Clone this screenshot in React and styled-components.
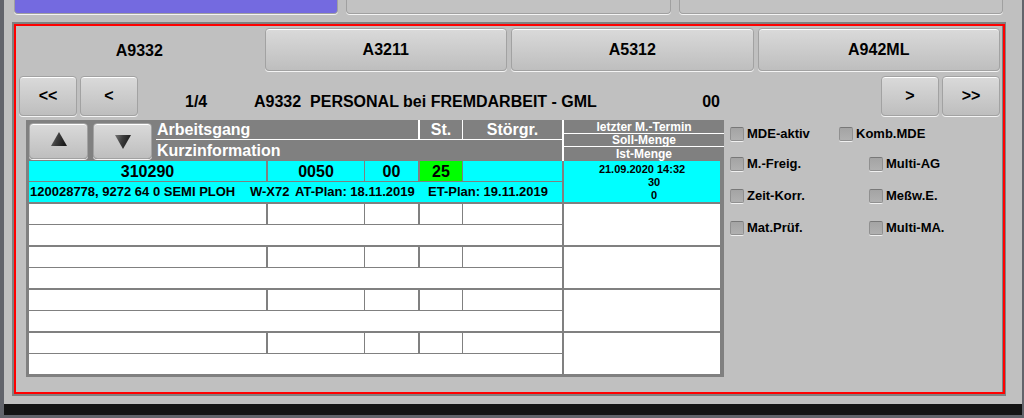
import React from "react";
import styled, { createGlobalStyle } from "styled-components";

const GlobalStyle = createGlobalStyle`
  *, *::before, *::after { box-sizing: border-box; }
  body {
    margin: 0;
    background: #62646b;
    color: #000;
    font-family: "Liberation Sans", Arial, sans-serif;
    font-size: 16px;
    font-weight: bold;
  }
`;

const Frame = styled.div`
  display: flex;
  flex-direction: column;
  min-height: 100vh;
  padding: 0 2px 3px 4px;
`;

const Screen = styled.main`
  flex: 1;
  padding: 0 16px 8px 8px;
  background: #c0c0c0;
`;

const BottomBar = styled.footer`
  height: 11px;
  background: #141414;
`;

const TopStrip = styled.div`
  display: grid;
  grid-template-columns: repeat(3, 1fr);
  gap: 8px;
  height: 14px;
  margin: 0 3px 8px 2px;
`;

const StripButton = styled.button`
  border: 1px solid #a0a0a0;
  border-top: 0;
  border-radius: 0 0 4px 4px;
  padding: 0;
  background: ${(p) => (p.$active ? "#746ae0" : "#c2c2c2")};
  box-shadow: 0 1px 0 #f4f4f4;
`;

const Panel = styled.section`
  border: 2px solid #808080;
  border-right-width: 1px;
`;

const PanelInner = styled.div`
  border: 2px solid #f00;
  padding: 2px 0 15px;
  box-shadow: inset -1px 0 0 #808080;
`;

const Button = styled.button`
  display: flex;
  align-items: center;
  justify-content: center;
  width: ${(p) => p.$width || "auto"};
  height: ${(p) => p.$height};
  padding: 0;
  border: 1px solid #a2a2a2;
  border-radius: 4px;
  background: linear-gradient(#dadada, #bebebe);
  box-shadow: inset 0 1px 0 #fff, 0 1px 0 #f4f4f4;
  color: #000;
  font: bold 16px "Liberation Sans", Arial, sans-serif;
`;

const Tabs = styled.nav`
  display: grid;
  grid-template-columns: repeat(4, 1fr);
  gap: 4px;
  padding: 0 3px 0 2px;
`;

const ActiveTab = styled.button`
  padding: 2px 0 0;
  border: 0;
  background: transparent;
  color: #000;
  font: bold 16px "Liberation Sans", Arial, sans-serif;
`;

const Toolbar = styled.div`
  display: flex;
  gap: 3px;
  padding: 5px 3px 4px;
`;

const Heading = styled.div`
  flex: 1;
  display: flex;
  align-items: center;
  padding: 12px 158px 0 44px;
  white-space: pre;
`;

const PageCount = styled.span`
  width: 69px;
`;

const Title = styled.h1`
  flex: 1;
  margin: 0;
  font-size: 16px;
`;

const Content = styled.div`
  display: flex;
  align-items: flex-start;
  padding-left: 10px;
`;

const TableBox = styled.div`
  flex: 1;
  padding: 0 0 1px 3px;
  background: #808080;
`;

const Table = styled.table`
  width: 100%;
  table-layout: fixed;
  border-collapse: separate;
  border-spacing: 0;
`;

const Row = styled.tr`
  height: ${(p) => p.$height}px;
`;

const HeadCell = styled.th`
  padding: 0 0 0 ${(p) => (p.$left ? "1px" : "0")};
  border: 0 solid #fff;
  border-right-width: ${(p) => p.$right || 0}px;
  border-bottom-width: ${(p) => (p.$bottom ? 1 : 0)}px;
  color: #fff;
  font-size: ${(p) => (p.$small ? 12 : 16)}px;
  line-height: ${(p) => (p.$small ? 12 : 18)}px;
  text-align: ${(p) => (p.$left ? "left" : "center")};
  white-space: nowrap;
`;

const Arrows = styled.div`
  display: flex;
  gap: 5px;
`;

const Cell = styled.td`
  padding: ${(p) => (p.$bottom ? 0 : 2)}px 0 0;
  border: 0 solid #808080;
  border-right-width: ${(p) => p.$right || 0}px;
  border-bottom-width: ${(p) => p.$bottom || 1}px;
  background: ${(p) => (p.$status ? "#0f0" : p.$active ? "#0ff" : "#fff")};
  font-size: 16px;
  line-height: 18px;
  text-align: center;
  white-space: nowrap;
`;

const Info = styled.div`
  display: flex;
  padding-left: 1px;
  overflow: hidden;
  font-size: 13px;
  line-height: 18px;
  text-align: left;
`;

const InfoPart = styled.span`
  flex: none;
  width: ${(p) => p.$width}px;
`;

const Amounts = styled.div`
  padding-left: ${(p) => (p.$shifted ? 24 : 0)}px;
  font-size: 11px;
  line-height: 13px;

  &:first-child {
    padding-top: 2px;
  }
`;

const Options = styled.form`
  width: 279px;
  padding: 6px 0 0 6px;
  display: grid;
  grid-template-rows: 30px;
  grid-auto-rows: 32px;
  align-items: start;
`;

const OptionRow = styled.div`
  display: grid;
  grid-template-columns: ${(p) => (p.$compact ? "109px" : "139px")} 1fr;
`;

const Option = styled.label`
  display: flex;
  align-items: center;
  gap: 3px;
  font-size: 13px;
  line-height: 16px;
`;

const Check = styled.input.attrs({ type: "checkbox" })`
  appearance: none;
  width: 14px;
  height: 14px;
  margin: 0;
  border: 1px solid #909090;
  border-top-color: #787878;
  border-radius: 2px;
  background: linear-gradient(#a4a4a4, #b0b0b0);
  box-shadow: 0 1px 0 #f0f0f0;
`;

const Arrow = ({ down }) => (
  <svg width="16" height="17" viewBox="0 0 16 17" aria-hidden="true">
    <defs>
      <linearGradient id={down ? "shadeDown" : "shadeUp"} x1="0" y1="0" x2="1" y2="0.3">
        <stop offset="0" stopColor="#777" />
        <stop offset="0.5" stopColor="#3c3c3c" />
        <stop offset="1" stopColor="#1c1c1c" />
      </linearGradient>
    </defs>
    <path
      d={down ? "M0 3H16L8 17Z" : "M8 0L16 14H0Z"}
      fill={`url(#${down ? "shadeDown" : "shadeUp"})`}
    />
  </svg>
);

const orders = [
  {
    id: "310290",
    step: "0050",
    split: "00",
    status: "25",
    info: ["120028778, 9272 64 0 SEMI PLOH", "W-X72", "AT-Plan: 18.11.2019", "ET-Plan: 19.11.2019"],
    amounts: ["21.09.2020 14:32", "30", "0"],
  },
  {},
  {},
  {},
  {},
];

const infoWidths = [220, 45, 133, 130];

const options = [
  ["MDE-aktiv", "Komb.MDE"],
  ["M.-Freig.", "Multi-AG"],
  ["Zeit-Korr.", "Meßw.E."],
  ["Mat.Prüf.", "Multi-MA."],
];

const Order = ({ order }) => {
  const active = Boolean(order.id);
  return (
    <>
      <Row $height={21}>
        <Cell $active={active} colSpan={2} $right={2}>{order.id}</Cell>
        <Cell $active={active} $right={1}>{order.step}</Cell>
        <Cell $active={active} $right={2}>{order.split}</Cell>
        <Cell $active={active} $status={active} $right={1}>{order.status}</Cell>
        <Cell $active={active} $right={2} />
        <Cell $active={active} rowSpan={2} $right={4} $bottom={2}>
          {order.amounts?.map((value, i) => (
            <Amounts key={value} $shifted={i > 0}>{value}</Amounts>
          ))}
        </Cell>
      </Row>
      <Row $height={22}>
        <Cell $active={active} colSpan={6} $right={2} $bottom={2}>
          {active && (
            <Info>
              {order.info.map((part, i) => (
                <InfoPart key={part} $width={infoWidths[i]}>{part}</InfoPart>
              ))}
            </Info>
          )}
        </Cell>
      </Row>
    </>
  );
};

export default function App() {
  return (
    <>
      <GlobalStyle />
      <Frame>
        <Screen>
          <TopStrip>
            <StripButton $active aria-label="1" />
            <StripButton aria-label="2" />
            <StripButton aria-label="3" />
          </TopStrip>
          <Panel>
            <PanelInner>
              <Tabs>
                <ActiveTab>A9332</ActiveTab>
                <Button $height="43px">A3211</Button>
                <Button $height="43px">A5312</Button>
                <Button $height="43px">A942ML</Button>
              </Tabs>
              <Toolbar>
                <Button $width="58px" $height="40px">&lt;&lt;</Button>
                <Button $width="58px" $height="40px">&lt;</Button>
                <Heading>
                  <PageCount>1/4</PageCount>
                  <Title>A9332  PERSONAL bei FREMDARBEIT - GML</Title>
                  <span>00</span>
                </Heading>
                <Button $width="58px" $height="40px">&gt;</Button>
                <Button $width="58px" $height="40px">&gt;&gt;</Button>
              </Toolbar>
              <Content>
                <TableBox>
                  <Table>
                    <colgroup>
                      <col style={{ width: 127 }} />
                      <col />
                      <col style={{ width: 97 }} />
                      <col style={{ width: 55 }} />
                      <col style={{ width: 43 }} />
                      <col style={{ width: 101 }} />
                      <col style={{ width: 160 }} />
                    </colgroup>
                    <thead>
                      <Row $height={14}>
                        <HeadCell rowSpan={4}>
                          <Arrows>
                            <Button $width="59px" $height="36px" aria-label="Nach oben"><Arrow /></Button>
                            <Button $width="59px" $height="36px" aria-label="Nach unten"><Arrow down /></Button>
                          </Arrows>
                        </HeadCell>
                        <HeadCell rowSpan={2} colSpan={3} $left $right={2} $bottom>Arbeitsgang</HeadCell>
                        <HeadCell rowSpan={2} $right={1} $bottom>St.</HeadCell>
                        <HeadCell rowSpan={2} $right={2} $bottom>Störgr.</HeadCell>
                        <HeadCell $small $bottom>letzter M.-Termin</HeadCell>
                      </Row>
                      <Row $height={6}>
                        <HeadCell rowSpan={2} $small $bottom>Soll-Menge</HeadCell>
                      </Row>
                      <Row $height={7}>
                        <HeadCell rowSpan={2} colSpan={5} $left $right={2}>Kurzinformation</HeadCell>
                      </Row>
                      <Row $height={14}>
                        <HeadCell $small>Ist-Menge</HeadCell>
                      </Row>
                    </thead>
                    <tbody>
                      {orders.map((order, i) => <Order key={i} order={order} />)}
                    </tbody>
                  </Table>
                </TableBox>
                <Options>
                  {options.map((pair, i) => (
                    <OptionRow key={pair[0]} $compact={i === 0}>
                      {pair.map((name) => (
                        <Option key={name}><Check />{name}</Option>
                      ))}
                    </OptionRow>
                  ))}
                </Options>
              </Content>
            </PanelInner>
          </Panel>
        </Screen>
        <BottomBar />
      </Frame>
    </>
  );
}
